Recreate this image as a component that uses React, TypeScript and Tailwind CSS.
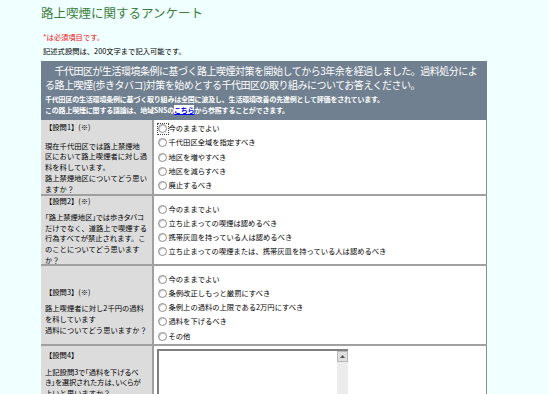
import React from "react";

const Radio = ({ focus = false }: { focus?: boolean }) => (
  <span className="relative inline-block h-[9px] w-[9px] shrink-0 rounded-full border border-[#8c8c8c] bg-white shadow-[inset_1px_1px_0_#cfcfcf]">
    {focus && <span className="absolute -inset-[2.5px] border border-dotted border-[#444]" />}
  </span>
);

const Options = ({ items, lh, focusFirst = false }: { items: string[]; lh: string; focusFirst?: boolean }) => (
  <div className="flex flex-col">
    {items.map((t, i) => (
      <div key={i} className={`flex items-center gap-[1.5px] whitespace-nowrap ${lh}`}>
        <Radio focus={focusFirst && i === 0} />
        <span>{t}</span>
      </div>
    ))}
  </div>
);

const Lines = ({ lines, narrow = [] }: { lines: string[]; narrow?: number[] }) => (
  <div className="whitespace-nowrap">
    {lines.map((l, i) => (
      <div key={i} className={narrow.includes(i) ? "[font-feature-settings:'palt']" : ""}>
        {l}
      </div>
    ))}
  </div>
);

export default function App() {
  return (
    <div className="h-[394px] overflow-hidden bg-[#f0ffff] font-['Noto_Sans_CJK_JP',sans-serif] text-black">
      <div className="pl-[41px] pt-[4px]">
        <h1 className="whitespace-nowrap text-[12.5px] font-normal leading-[18px] text-[#3a7d3a]">
          路上喫煙に関するアンケート
        </h1>
        <p className="mt-[9px] pl-[2px] text-[7.3px] leading-[12px] text-[#ee1111]">*は必須項目です。</p>
        <p className="mt-[2px] pl-[2px] text-[7.3px] leading-[12px]">記述式設問は、200文字まで記入可能です。</p>

        <div className="mt-[4px] w-[446px]">
          {/* header */}
          <div className="h-[59px] bg-[#708090] pl-[4px] pt-[3px] text-white">
            <div className="whitespace-nowrap text-[10px] leading-[14px] tracking-[-0.5px]">
              <div>　千代田区が生活環境条例に基づく路上喫煙対策を開始してから3年余を経過しました。過料処分によ</div>
              <div>る路上喫煙(歩きタバコ)対策を始めとする千代田区の取り組みについてお答えください。</div>
            </div>
            <div className="mt-[1.5px] whitespace-nowrap text-[7px] font-bold leading-[11px] tracking-[-0.2px]">
              <div>千代田区の生活環境条例に基づく取り組みは全国に波及し、生活環境改善の先進例として評価をされています。</div>
              <div>
                この路上喫煙に関する議論は、地域SNSの
                <span className="bg-white text-[#0000ee] underline">こちら</span>
                から参照することができます。
              </div>
            </div>
          </div>

          {/* row 1 */}
          <div className="flex h-[76px] border-b-2 border-[#a0a0a0] text-[7.3px]">
            <div className="w-[111px] shrink-0 bg-[#dcdcdc] pl-[4px] pt-[1.75px] leading-[10.75px]">
              <div>【設問1】(※)</div>
              <div className="mt-[8px]">
                <Lines lines={["現在千代田区では路上禁煙地", "区において路上喫煙者に対し過", "料を科しています。", "路上禁煙地区についてどう思い", "ますか？"]} />
              </div>
            </div>
            <div className="flex flex-1 flex-col justify-center border-l-2 border-r border-l-[#a0a0a0] border-r-[#8c8c8c] bg-white pl-[4px]">
              <Options
                lh="h-[14.25px]"
                focusFirst
                items={["今のままでよい", "千代田区全域を指定すべき", "地区を増やすべき", "地区を減らすべき", "廃止するべき"]}
              />
            </div>
          </div>

          {/* row 2 */}
          <div className="flex h-[70px] border-b-2 border-[#a0a0a0] text-[7.3px]">
            <div className="w-[111px] shrink-0 bg-[#dcdcdc] pl-[4px] pt-0 leading-[10.75px]">
              <div>【設問2】(※)</div>
              <div className="mt-[5px]">
                <Lines
                  narrow={[0]}
                  lines={["「路上禁煙地区」では歩きタバコ", "だけでなく、道路上で喫煙する", "行為すべてが禁止されます。こ", "のことについてどう思います", "か？"]}
                />
              </div>
            </div>
            <div className="flex flex-1 flex-col justify-center border-l-2 border-r border-l-[#a0a0a0] border-r-[#8c8c8c] bg-white pl-[4px]">
              <Options
                lh="h-[14px]"
                items={["今のままでよい", "立ち止まっての喫煙は認めるべき", "携帯灰皿を持っている人は認めるべき", "立ち止まっての喫煙または、携帯灰皿を持っている人は認めるべき"]}
              />
            </div>
          </div>

          {/* row 3 */}
          <div className="flex h-[80px] border-b-2 border-[#a0a0a0] text-[7.3px]">
            <div className="w-[111px] shrink-0 bg-[#dcdcdc] pl-[4px] pt-[20.5px] leading-[10.75px]">
              <div>【設問3】(※)</div>
              <div className="mt-[6px]">
                <Lines lines={["路上喫煙者に対し2千円の過料", "を科しています", "過料についてどう思いますか？"]} />
              </div>
            </div>
            <div className="flex flex-1 flex-col border-l-2 border-r border-l-[#a0a0a0] border-r-[#8c8c8c] bg-white pl-[4px] pt-[6px]">
              <Options
                lh="h-[14.25px]"
                items={["今のままでよい", "条例改正しもっと厳罰にすべき", "条例上の過料の上限である2万円にすべき", "過料を下げるべき", "その他"]}
              />
            </div>
          </div>

          {/* row 4 */}
          <div className="flex h-[90px] text-[7.3px]">
            <div className="w-[111px] shrink-0 bg-[#dcdcdc] pl-[4px] pt-[3.5px] leading-[10.75px]">
              <div>【設問4】</div>
              <div className="mt-[6.25px]">
                <Lines
                  narrow={[0, 1]}
                  lines={["上記設問3で「過料を下げるべ", "き」を選択された方は、いくらが", "よいと思いますか？"]}
                />
              </div>
            </div>
            <div className="flex-1 border-l-2 border-r border-l-[#a0a0a0] border-r-[#8c8c8c] bg-white pl-[3px] pt-[3px]">
              <div className="flex h-[70px] w-[191px] border-l-2 border-t-2 border-[#7f7f7f] bg-white">
                <div className="flex-1" />
                <div className="flex w-[11px] flex-col bg-[#ececec]">
                  <div className="flex h-[11px] items-center justify-center border border-[#b8b8b8] bg-[#dedede]">
                    <svg width="5" height="3" viewBox="0 0 5 3">
                      <path d="M2.5 0 L5 3 L0 3 Z" fill="#555" />
                    </svg>
                  </div>
                </div>
              </div>
            </div>
          </div>
        </div>
      </div>
    </div>
  );
}
